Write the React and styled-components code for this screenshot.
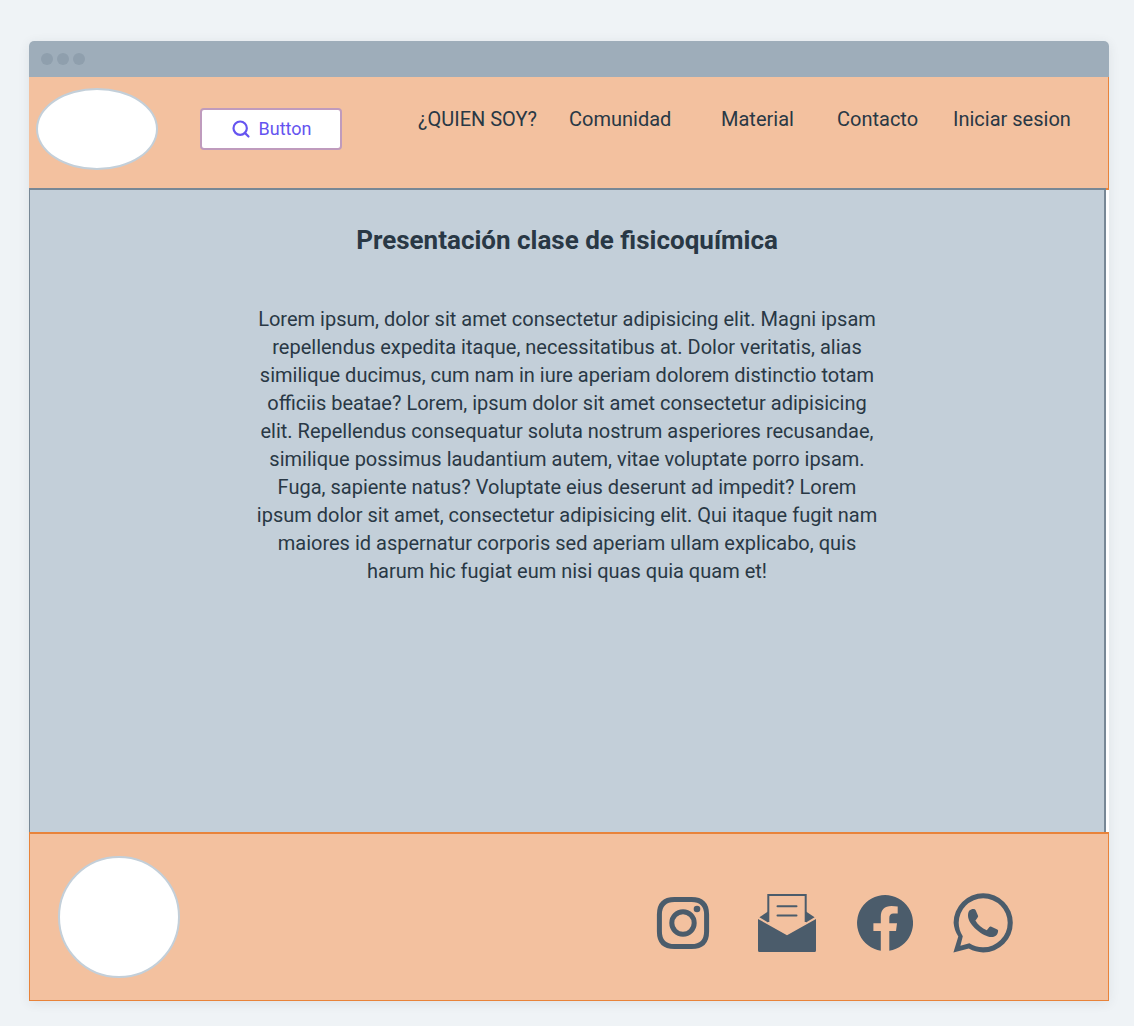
import React from 'react';
import styled, { createGlobalStyle } from 'styled-components';
import { Search } from 'lucide-react';

const GlobalStyle = createGlobalStyle`
  * { box-sizing: border-box; }
  body {
    margin: 0;
    background: #eff3f6;
    color: #293845;
    font-family: Roboto, "Liberation Sans", sans-serif;
  }
`;

const Page = styled.div`
  padding: 41px 25px 25px 29px;
`;

const BrowserWindow = styled.div`
  display: flex;
  flex-direction: column;
  background: #ffffff;
  border-radius: 5px 5px 0 0;
  box-shadow: 0 2px 12px rgba(41, 56, 69, 0.09);
`;

const TitleBar = styled.div`
  display: flex;
  align-items: center;
  gap: 4px;
  height: 36px;
  padding: 0 12px;
  background: #9eadba;
  border-radius: 5px 5px 0 0;
`;

const WindowDot = styled.span`
  width: 12px;
  height: 12px;
  border-radius: 50%;
  background: #8f9fad;
`;

const Header = styled.header`
  display: flex;
  align-items: flex-start;
  padding: 11px 35px 18px 7px;
  background: #f3c19f;
  border-right: 1px solid #e8833a;
  border-bottom: 2px solid #e8833a;
`;

const Logo = styled.div`
  flex: none;
  width: 122px;
  height: ${({ $height }) => $height}px;
  border: 2px solid #c3cfd9;
  border-radius: 50%;
  background: #ffffff;
`;

const SearchButton = styled.button`
  display: flex;
  align-items: center;
  justify-content: center;
  gap: 8px;
  width: 142px;
  height: 42px;
  margin: 20px 0 0 42px;
  padding: 0;
  border: 2px solid #bf9bbd;
  border-radius: 4px;
  background: #ffffff;
  color: #6554f0;
  font-family: inherit;
  font-size: 18px;
  line-height: 24px;
`;

const Nav = styled.nav`
  display: grid;
  grid-template-columns: 151px 152px 116px 116px 120px;
  margin: 17px 0 0 auto;
`;

const NavLink = styled.a`
  color: inherit;
  font-size: 20px;
  line-height: 28px;
  text-decoration: none;
  white-space: nowrap;
`;

const Main = styled.main`
  position: relative;
  display: flex;
  flex-direction: column;
  align-items: center;
  min-height: 644px;
  margin: -2px 3px 0 0;
  padding: 33px 24px;
  background: #c3cfd9;
  border: solid #788896;
  border-width: 2px 2px 0 1px;
  text-align: center;
`;

const Title = styled.h1`
  margin: 0 0 48px;
  font-size: 26px;
  font-weight: 700;
  line-height: 34px;
`;

const Paragraph = styled.p`
  margin: 0;
  font-size: 20px;
  line-height: 28px;
`;

const Footer = styled.footer`
  display: flex;
  align-items: center;
  justify-content: space-between;
  padding: 22px 95px 22px 28px;
  background: #f3c19f;
  border: solid #e8833a;
  border-width: 2px 1px 1px;
`;

const SocialLinks = styled.div`
  display: grid;
  grid-template-columns: 101px 100px 96px 60px;
  align-items: center;
  padding-top: 12px;
`;

const SocialLink = styled.a`
  display: flex;
  color: #4b5c6b;
`;

const navItems = ['¿QUIEN SOY?', 'Comunidad', 'Material', 'Contacto', 'Iniciar sesion'];

const lines = [
  'Lorem ipsum, dolor sit amet consectetur adipisicing elit. Magni ipsam',
  'repellendus expedita itaque, necessitatibus at. Dolor veritatis, alias',
  'similique ducimus, cum nam in iure aperiam dolorem distinctio totam',
  'officiis beatae? Lorem, ipsum dolor sit amet consectetur adipisicing',
  'elit. Repellendus consequatur soluta nostrum asperiores recusandae,',
  'similique possimus laudantium autem, vitae voluptate porro ipsam.',
  'Fuga, sapiente natus? Voluptate eius deserunt ad impedit? Lorem',
  'ipsum dolor sit amet, consectetur adipisicing elit. Qui itaque fugit nam',
  'maiores id aspernatur corporis sed aperiam ullam explicabo, quis',
  'harum hic fugiat eum nisi quas quia quam et!',
];

function InstagramIcon() {
  return (
    <svg width="54" height="54" viewBox="0 0 54 54" fill="none" stroke="currentColor" strokeWidth="5" aria-hidden="true">
      <path d="M18.5 3.4H35.5Q50.6 3.4 50.6 18.5V35.5Q50.6 50.6 35.5 50.6H18.5Q3.4 50.6 3.4 35.5V18.5Q3.4 3.4 18.5 3.4Z" />
      <circle cx="27" cy="27" r="11.2" />
      <circle cx="41" cy="13" r="3.3" fill="currentColor" stroke="none" />
    </svg>
  );
}

function MailIcon() {
  return (
    <svg width="60" height="60" viewBox="0 0 60 60" fill="none" aria-hidden="true">
      <path d="M11.3 29V2H48.7V29" stroke="currentColor" strokeWidth="2" />
      <path d="M20.5 13.2H39.5M20.5 22.6H39.5" stroke="currentColor" strokeWidth="2" strokeLinecap="round" />
      <path d="M11 18.5V29.5L2.4 24.3ZM49 18.5V29.5L57.6 24.3Z" fill="currentColor" />
      <path d="M1 26L30 42.3L59 26V57.5Q59 59 57.5 59H2.5Q1 59 1 57.5Z" fill="currentColor" />
    </svg>
  );
}

function FacebookIcon() {
  return (
    <svg width="56" height="56" viewBox="0 0 56 56" fill="currentColor" aria-hidden="true">
      <path d="M23.8 55.7A28 28 0 1 1 32.3 55.7V36H39L40 28.3H32.3V23Q32.3 18.5 36.5 18.5H40.7V11.4Q38 11 34.5 11C27.5 11 23.8 15 23.8 21.5V28.3H16.4V36H23.8Z" />
    </svg>
  );
}

function WhatsappIcon() {
  return (
    <svg width="60" height="60" viewBox="0 0 60 60" fill="currentColor" aria-hidden="true">
      <path
        fillRule="evenodd"
        d="M.4 59.6L5.3 43.5A28.6 28.6 0 0 1 .6 29.8A29.6 29.6 0 0 1 59.8 29.8A29.6 29.6 0 0 1 30.2 59.4A29.6 29.6 0 0 1 15.8 55.6ZM7.4 52.8L16.4 50.3A24.6 24.6 0 0 0 30.2 54.3A24.5 24.5 0 0 0 54.7 29.8A24.5 24.5 0 0 0 30.2 5.3A24.5 24.5 0 0 0 5.7 29.8A24.5 24.5 0 0 0 9.8 43.2Z"
      />
      <path d="M16.4 17.6C17.6 16.3 19.4 15.8 21 16C22.2 16.2 22.6 16.9 23 18L25 22.8C25.3 23.6 25 24.4 22.4 27.6C25.2 32.2 28.8 35.3 33.8 37.2L36.4 34C37 33.3 37.6 33.3 38.4 33.7L44.3 36.5C45.2 37 45.2 37.6 45 38.7C44.5 42.2 41.7 43.9 38.6 44C30.4 44.2 15.1 32 15 22.7C15 20.6 15.4 18.8 16.4 17.6Z" />
    </svg>
  );
}

const socials = [
  { label: 'Instagram', Icon: InstagramIcon },
  { label: 'Email', Icon: MailIcon },
  { label: 'Facebook', Icon: FacebookIcon },
  { label: 'WhatsApp', Icon: WhatsappIcon },
];

export default function App() {
  return (
    <Page>
      <GlobalStyle />
      <BrowserWindow>
        <TitleBar>
          <WindowDot />
          <WindowDot />
          <WindowDot />
        </TitleBar>
        <Header>
          <Logo $height={82} />
          <SearchButton type="button">
            <Search size={20} strokeWidth={2.6} aria-hidden="true" />
            Button
          </SearchButton>
          <Nav>
            {navItems.map((item) => (
              <NavLink href="#" key={item}>{item}</NavLink>
            ))}
          </Nav>
        </Header>
        <Main>
          <Title>Presentación clase de fisicoquímica</Title>
          <Paragraph>
            {lines.map((line) => (
              <React.Fragment key={line}>
                {line}
                <br />
              </React.Fragment>
            ))}
          </Paragraph>
        </Main>
        <Footer>
          <Logo $height={122} />
          <SocialLinks>
            {socials.map(({ label, Icon }) => (
              <SocialLink href="#" aria-label={label} key={label}>
                <Icon />
              </SocialLink>
            ))}
          </SocialLinks>
        </Footer>
      </BrowserWindow>
    </Page>
  );
}
